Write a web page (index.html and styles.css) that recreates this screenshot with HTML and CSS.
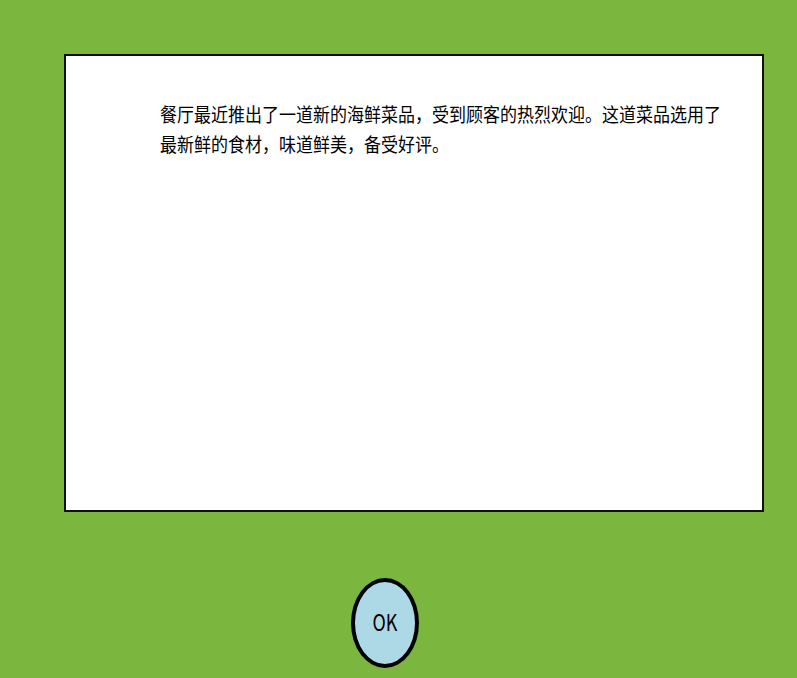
FILE: index.html
```html
<!DOCTYPE html>
<html lang="zh">
<head>
<meta charset="utf-8">
<link rel="stylesheet" href="styles.css">
</head>
<body>
<div class="page">
  <div class="dialog">
    <p class="message">餐厅最近推出了一道新的海鲜菜品，受到顾客的热烈欢迎。这道菜品选用了最新鲜的食材，味道鲜美，备受好评。</p>
  </div>
  <div class="actions">
    <button class="ok"><span class="ok-label">OK</span></button>
  </div>
</div>
</body>
</html>
```
FILE: styles.css
```css
html, body {
  margin: 0;
  padding: 0;
  background: #7bb63f;
  height: 100%;
  overflow: hidden;
}
.page {
  padding: 54px 0 0 64px;
  font-family: "Noto Sans CJK SC", "Noto Sans", sans-serif;
}
.dialog {
  box-sizing: border-box;
  width: 700px;
  height: 458px;
  background: #fff;
  border: 2px solid #111;
  padding: 42px 0 0 94px;
}
.message {
  margin: 0;
  width: 565px;
  font-size: 17px;
  line-height: 27px;
  color: #000;
  transform: scaleY(1.12);
  transform-origin: top left;
}
.actions {
  padding: 66px 0 0 287px;
}
.ok {
  box-sizing: border-box;
  width: 68px;
  height: 90px;
  border-radius: 50%;
  border: 4px solid #000;
  background: #add8e6;
  font-family: "Noto Sans CJK SC", "Noto Sans", sans-serif;
  font-size: 23px;
  color: #000;
  padding: 0 0 4px;
}
.ok-label {
  display: inline-block;
  transform: scaleX(0.78);
}
```
